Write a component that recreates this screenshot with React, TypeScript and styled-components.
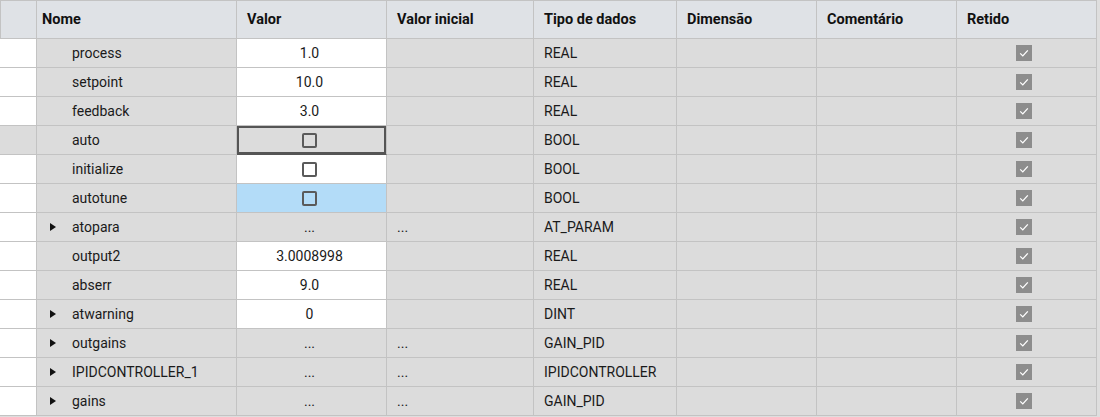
import styled, { createGlobalStyle, css } from 'styled-components'

type Row = {
  name: string
  value?: string
  bool?: boolean
  initial?: string
  type: string
  expandable?: boolean
  editable?: boolean
  state?: 'focused' | 'selected'
}

const rows: Row[] = [
  { name: 'process', value: '1.0', type: 'REAL', editable: true },
  { name: 'setpoint', value: '10.0', type: 'REAL', editable: true },
  { name: 'feedback', value: '3.0', type: 'REAL', editable: true },
  { name: 'auto', bool: true, type: 'BOOL', state: 'focused' },
  { name: 'initialize', bool: true, type: 'BOOL', editable: true },
  { name: 'autotune', bool: true, type: 'BOOL', state: 'selected' },
  { name: 'atopara', value: '...', initial: '...', type: 'AT_PARAM', expandable: true },
  { name: 'output2', value: '3.0008998', type: 'REAL', editable: true },
  { name: 'abserr', value: '9.0', type: 'REAL', editable: true },
  { name: 'atwarning', value: '0', type: 'DINT', expandable: true, editable: true },
  { name: 'outgains', value: '...', initial: '...', type: 'GAIN_PID', expandable: true },
  { name: 'IPIDCONTROLLER_1', value: '...', initial: '...', type: 'IPIDCONTROLLER', expandable: true },
  { name: 'gains', value: '...', initial: '...', type: 'GAIN_PID', expandable: true },
]

const headers = ['Nome', 'Valor', 'Valor inicial', 'Tipo de dados', 'Dimensão', 'Comentário', 'Retido']

export default function App() {
  return (
    <>
      <GlobalStyle />
      <Grid>
        <HeadCell />
        {headers.map((h) => (
          <HeadCell key={h}>{h}</HeadCell>
        ))}
        {rows.map((r) => (
          <RowGroup key={r.name} row={r} />
        ))}
      </Grid>
    </>
  )
}

function RowGroup({ row }: { row: Row }) {
  const focused = row.state === 'focused'
  return (
    <>
      <Cell $white={!focused} />
      <NameCell>
        {row.expandable && <Arrow />}
        <span>{row.name}</span>
      </NameCell>
      <ValueCell
        $white={!!row.editable}
        $selected={row.state === 'selected'}
        $focused={focused}
      >
        {row.bool ? <BoolBox /> : row.value}
      </ValueCell>
      <TextCell>{row.initial}</TextCell>
      <TextCell>{row.type}</TextCell>
      <Cell />
      <Cell />
      <CheckCell>
        <Retained>
          <svg width="12" height="12" viewBox="0 0 12 12">
            <path d="M2.2 6.4 L4.8 8.9 L9.8 3.4" fill="none" stroke="#fff" strokeWidth="1.3" />
          </svg>
        </Retained>
      </CheckCell>
    </>
  )
}

// ========== Styled Components ==========

const GlobalStyle = createGlobalStyle`
  body {
    margin: 0;
    background: #dedede;
    font-family: Roboto, "Liberation Sans", sans-serif;
  }
`

const Grid = styled.div`
  display: grid;
  grid-template-columns: 37px 200px 150px 147px 143px 140px 140px 140px;
  grid-template-rows: 38px;
  grid-auto-rows: 29px;
  width: 1097px;
  border-top: 1px solid #c3c3c3;
  background: #dddddd;
  color: #1a1a1a;
  font-size: 14px;
`

const cellBase = css`
  box-sizing: border-box;
  border-right: 1px solid #c3c3c3;
  border-bottom: 1px solid #c3c3c3;
  display: flex;
  align-items: center;
  min-width: 0;
  white-space: nowrap;
`

const HeadCell = styled.div`
  ${cellBase}
  background: #dfe2e6;
  font-weight: 700;
  font-size: 14.5px;
  color: #111111;
  padding: 0 0 1px 10px;
  &:nth-child(1) {
    border-left: 1px solid #c3c3c3;
  }
  &:nth-child(2) {
    padding-left: 5px;
  }
`

const Cell = styled.div<{ $white?: boolean }>`
  ${cellBase}
  background: ${(p) => (p.$white ? '#ffffff' : '#dcdcdc')};
`

const NameCell = styled(Cell)`
  padding-left: 13px;
  position: relative;
  span {
    position: absolute;
    left: 35px;
  }
`

const Arrow = styled.i`
  width: 0;
  height: 0;
  border-top: 4.5px solid transparent;
  border-bottom: 4.5px solid transparent;
  border-left: 6px solid #111;
`

const ValueCell = styled(Cell)<{ $selected?: boolean; $focused?: boolean }>`
  justify-content: center;
  padding-right: 4px;
  ${(p) => p.$selected && 'background: #b3dcf8;'}
  ${(p) =>
    p.$focused &&
    css`
      box-shadow: inset 0 0 0 2px #555555;
      border-bottom-color: #555555;
    `}
`

const TextCell = styled(Cell)`
  padding-left: 10px;
`

const CheckCell = styled(Cell)`
  justify-content: center;
  padding-right: 6px;
`

const BoolBox = styled.span`
  width: 15px;
  height: 15px;
  box-sizing: border-box;
  border: 2px solid #5a5a5a;
  border-radius: 2px;
`

const Retained = styled.span`
  width: 16px;
  height: 16px;
  background: #8d8d8d;
  display: flex;
  align-items: center;
  justify-content: center;
`
